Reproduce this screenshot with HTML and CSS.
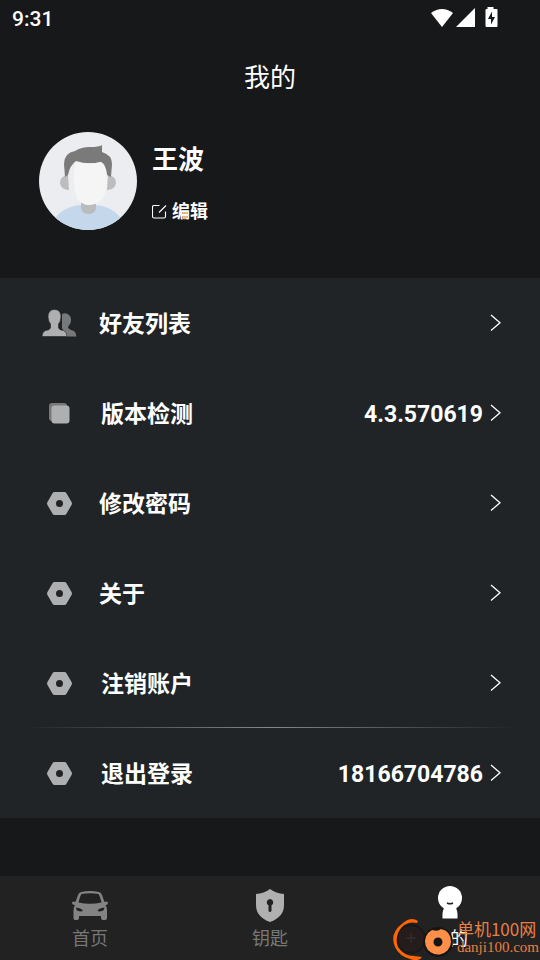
FILE: index.html
```html
<!DOCTYPE html>
<html lang="zh-CN">
<head>
<meta charset="utf-8">
<meta name="viewport" content="width=device-width, initial-scale=1">
<title>我的</title>
<link rel="stylesheet" href="styles.css">
</head>
<body>
<svg class="defs" aria-hidden="true">
  <symbol id="chevron" viewBox="0 0 12 18"><path d="M2 1L11 8.800L2 16.500" fill="none" stroke="#fff" stroke-width="1.300"/></symbol>
  <symbol id="nut" viewBox="0 0 36 30"><path fill-rule="evenodd" fill="#adafb1" d="M12.500 4H22.500Q23.700 4 24.300 5L29.700 14.300Q30.200 15.500 29.700 16.700L24.300 26Q23.700 27 22.500 27H12.500Q11.300 27 10.700 26L5.300 16.700Q4.800 15.500 5.300 14.300L10.700 5Q11.300 4 12.500 4ZM17.500 12A3.500 3.500 0 1 0 17.500 19A3.500 3.500 0 1 0 17.500 12Z"/></symbol>
</svg>
<div class="screen">
  <header class="status">
    <span class="clock">9:31</span>
    <svg width="70" height="22" viewBox="0 0 70 22" fill="#fff" aria-hidden="true">
      <path d="M1 6Q12 -2 23 6L12 20Z"/>
      <path d="M45 1V20H26Z"/>
      <path fill-rule="evenodd" d="M57.500 0H63.500V2H66.500Q67.500 2 67.500 3V19Q67.500 20 66.500 20H56.500Q55.500 20 55.500 19V3Q55.500 2 56.500 2H57.500ZM62 4.500L58 12H61V17.500L65 10H62Z"/>
    </svg>
  </header>
  <h1 class="title">我的</h1>
  <section class="profile">
    <svg class="avatar" viewBox="0 0 98 98" role="img" aria-label="头像">
      <clipPath id="round"><circle cx="49" cy="49" r="49"/></clipPath>
      <g clip-path="url(#round)">
        <path fill="#ebedf0" d="M0 0H98V98H0Z"/>
        <path fill="#c5d8eb" d="M8 98Q20 74 42 73H56Q78 74 90 98Z"/>
        <path fill="#b9bbbd" d="M42 70H57V75Q57 82 49.500 82Q42 82 42 75Z"/>
        <path fill="#bdbdbf" d="M29 43Q21 44 21 51Q22 58 30 58ZM69 43Q77 44 77 51Q76 58 68 58Z"/>
        <path fill="#7a7a7b" d="M26 45L25 32Q25 21 36 19Q42 15 51 15Q60 15 63 13V20Q73 23 73 32L72 45L68 43Q67 32 62 30Q49 33 37 29Q31 33 29 43Z"/>
        <path fill="#f5f5f5" d="M37 30Q49 33 62 30Q69 37 68 52Q66 73 49 73Q36 72 35 52Q34 37 37 30Z"/>
      </g>
    </svg>
    <div class="who">
      <h2 class="name">王波</h2>
      <button class="edit" type="button">
        <svg width="16" height="16" viewBox="0 0 16 16" fill="none" stroke="#fff" stroke-width="1.100" aria-hidden="true"><path d="M7.500 1.500H2Q.5 1.500 .5 3V12.500Q.5 14 2 14H12Q13.500 14 13.500 12.500V7.500M7 8.500L14 1.500"/></svg>
        <span>编辑</span>
      </button>
    </div>
  </section>
  <main class="list">
    <button class="row" type="button">
      <svg class="icon" viewBox="0 0 36 30" aria-hidden="true">
        <path fill="#77797b" d="M20 6Q25 4 28 8Q30 12 28 16Q26 18 26 20Q28 22 32 23Q34.500 25 34.500 28.500H24L20 20Z"/>
        <path fill="#adafb1" stroke="#202426" stroke-width=".6" d="M12.500 1.500Q19 1.500 19 9Q18.500 14 16.500 16V20Q17.500 22 21.500 22.500Q25 24 25 28.500H0Q0 24 3.500 22.500Q7.500 22 8.500 20V16Q6.500 14 6 9Q6 1.500 12.500 1.500Z"/>
      </svg>
      <span class="label">好友列表</span>
      <svg class="go" aria-hidden="true"><use href="#chevron"/></svg>
    </button>
    <button class="row" type="button">
      <svg class="icon" viewBox="0 0 36 30" aria-hidden="true"><rect x="7" y="5" width="18" height="18" rx="3" fill="#77797b"/><rect x="9.500" y="7.500" width="18" height="18" rx="3" fill="#adafb1"/></svg>
      <span class="label inset">版本检测</span>
      <span class="value">4.3.570619</span>
      <svg class="go" aria-hidden="true"><use href="#chevron"/></svg>
    </button>
    <button class="row" type="button">
      <svg class="icon" aria-hidden="true"><use href="#nut"/></svg>
      <span class="label">修改密码</span>
      <svg class="go" aria-hidden="true"><use href="#chevron"/></svg>
    </button>
    <button class="row" type="button">
      <svg class="icon" aria-hidden="true"><use href="#nut"/></svg>
      <span class="label">关于</span>
      <svg class="go" aria-hidden="true"><use href="#chevron"/></svg>
    </button>
    <button class="row divided" type="button">
      <svg class="icon" aria-hidden="true"><use href="#nut"/></svg>
      <span class="label inset">注销账户</span>
      <svg class="go" aria-hidden="true"><use href="#chevron"/></svg>
    </button>
    <button class="row" type="button">
      <svg class="icon" aria-hidden="true"><use href="#nut"/></svg>
      <span class="label inset">退出登录</span>
      <span class="value">18166704786</span>
      <svg class="go" aria-hidden="true"><use href="#chevron"/></svg>
    </button>
  </main>
  <nav class="tabs">
    <a class="tab" href="#home">
      <svg width="40" height="36" viewBox="0 0 40 36" aria-hidden="true"><path fill="#838383" fill-rule="evenodd" d="M11 4Q20 2 29 4Q31 4.500 32 7L34.500 14Q37 13 38 14.500Q38 17 35.500 17Q37 19 37 22V30Q37 32 35 32H33Q31 32 31 30V28H9V30Q9 32 7 32H5Q3.500 32 3.500 30V22Q3.500 19 5 17Q2 17 2 14.500Q3 13 5.500 14L8 7Q9 4.500 11 4ZM11.500 6Q20 4.500 28.500 6Q30 8 31.500 14.500Q20 17 8.500 14.500Q10 8 11.500 6ZM6 19.500Q11 20 13 22.500Q12 24 8 23Q6 22 6 19.500ZM34.500 19.500Q29 20 27.500 22.500Q28.500 24 32 23Q34.500 22 34.500 19.500Z"/></svg>
      <span>首页</span>
    </a>
    <a class="tab" href="#keys">
      <svg width="40" height="36" viewBox="0 0 40 36" aria-hidden="true"><path fill="#b0b0b0" fill-rule="evenodd" d="M20 1Q26 5.500 34 6V17Q34 29 20 34Q6 29 6 17V6Q14 5.500 20 1ZM20 11A3.300 3.300 0 0 0 18.500 17.200V23Q20 25 21.500 23V17.200A3.300 3.300 0 0 0 20 11Z"/></svg>
      <span>钥匙</span>
    </a>
    <a class="tab current" href="#me" aria-current="page">
      <svg width="40" height="36" viewBox="0 0 40 36" aria-hidden="true"><circle cx="20" cy="10" r="12" fill="#fff"/><path fill="#fff" d="M14.500 19H25.500Q28 23 27.500 30.500H12.500Q12 23 14.500 19Z"/><path d="M17 15Q20 16.500 23 15" fill="none" stroke="#222" stroke-width="1.500"/></svg>
      <span>我的</span>
    </a>
    <div class="stamp">
      <svg width="66" height="44" viewBox="0 0 66 44" aria-hidden="true">
        <circle cx="19" cy="23" r="14" fill="#241d1b" stroke="#181818" stroke-width="2"/>
        <path d="M14 22H24M19 17V27" stroke="#352d2b" stroke-width="1.500"/>
        <path d="M11 7Q19 0 26 5L25 7Q16 5 10 11Q2 20 6 31Q12 40 22 40L30 41Q27 46 18 43Q7 40 3 31Q-3 17 11 7Z" fill="#ff6500"/>
        <circle cx="46" cy="26" r="15" fill="#151515"/>
        <path fill="#ff8e48" fill-rule="evenodd" d="M40 14Q46 16 49 13Q59 15 59 26A13 13 0 1 1 40 14ZM46 21.500A4.500 4.500 0 1 0 46 30.500A4.500 4.500 0 1 0 46 21.500Z"/>
      </svg>
      <div class="words"><span class="site">单机100网</span><span class="domain">danji100.com</span></div>
    </div>
  </nav>
</div>
</body>
</html>
```
FILE: styles.css
```css
* { box-sizing: border-box; }
body {
  margin: 0;
  background: #17181a;
  color: #fff;
  font-family: Roboto, "Noto Sans CJK SC", sans-serif;
}
h1, h2 { margin: 0; }
button {
  border: 0;
  padding: 0;
  background: none;
  color: inherit;
  font: inherit;
  text-align: left;
}
.defs { position: absolute; width: 0; height: 0; }
.screen { display: flex; flex-direction: column; min-height: 100vh; }
.status {
  display: flex;
  justify-content: space-between;
  align-items: center;
  height: 36px;
  padding: 0 40px 0 12px;
}
.clock { font-size: 21px; line-height: 36px; font-weight: 500; padding-top: 2px; }
.title {
  font-size: 26px;
  line-height: 40px;
  padding: 22px 0 18px;
  font-weight: 400;
  text-align: center;
}
.profile {
  display: flex;
  gap: 15px;
  padding: 16px 39px 48px;
}
.avatar { width: 98px; height: 98px; }
.who { display: flex; flex-direction: column; gap: 18px; padding-top: 10px; }
.name { font-size: 26px; line-height: 36px; font-weight: 700; }
.edit {
  display: flex;
  align-items: center;
  gap: 4px;
  font-size: 18px;
  line-height: 32px;
  font-weight: 700;
}
.list { background: #202426; }
.row {
  position: relative;
  display: flex;
  align-items: center;
  width: 100%;
  height: 90px;
  padding: 0 39px 0 42px;
  font-size: 23px;
  line-height: 32px;
  font-weight: 700;
}
.icon { width: 36px; height: 30px; }
.label { flex: 1; padding: 4px 0 0 21px; }
.inset { padding-left: 23px; }
.value { padding-top: 4px; margin-right: 6px; }
.go { width: 12px; height: 18px; }
.divided::after {
  content: "";
  position: absolute;
  left: 24px;
  right: 24px;
  bottom: 0;
  height: 1px;
  background: linear-gradient(90deg, transparent, #85888b, transparent);
}
.tabs {
  position: relative;
  display: flex;
  margin-top: auto;
  height: 84px;
  background: #222;
}
.tab {
  display: flex;
  flex: 1;
  flex-direction: column;
  align-items: center;
  gap: 1px;
  padding-top: 12px;
  color: #777;
  font-size: 18px;
  line-height: 28px;
  text-decoration: none;
}
.tab svg { overflow: visible; }
.current { color: #fff; }
.stamp {
  position: absolute;
  right: 1px;
  bottom: 0;
  display: flex;
  align-items: center;
  color: #e87f42;
}
.words { display: flex; flex-direction: column; margin-left: -1px; }
.site { font-family: "Noto Sans CJK SC", sans-serif; font-size: 17px; line-height: 18px; }
.domain { font-family: "Liberation Serif", serif; font-size: 15px; line-height: 18px; }
```
